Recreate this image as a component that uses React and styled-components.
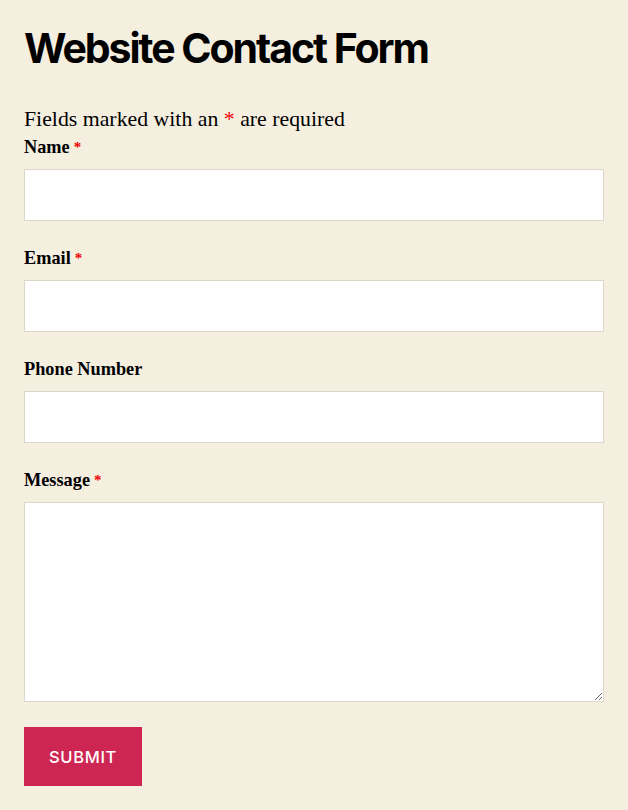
import React from 'react';
import styled, { createGlobalStyle } from 'styled-components';

const GlobalStyle = createGlobalStyle`
  html, body {
    margin: 0;
    padding: 0;
    background: #f5efe0;
  }
  * { box-sizing: border-box; }
`;

const Page = styled.div`
  padding: 23px 24px 24px;
  font-family: "Liberation Serif", "Times New Roman", serif;
  color: #000;
`;

const Title = styled.h1`
  margin: 0 0 34px;
  font-family: Inter, "Liberation Sans", sans-serif;
  font-weight: 700;
  font-size: 41px;
  line-height: 50px;
  letter-spacing: -0.05em;
  color: #000;
`;

const Note = styled.p`
  margin: 0 0 4px;
  font-size: 21.8px;
  line-height: 24px;
`;

const Req = styled.span`
  color: #e00;
  font-size: ${(p) => (p.small ? '15px' : 'inherit')};
  font-weight: ${(p) => (p.small ? 700 : 400)};
  vertical-align: ${(p) => (p.small ? 'top' : 'baseline')};
  margin-left: ${(p) => (p.small ? '4px' : '0')};
`;

const Form = styled.form`
  display: flex;
  flex-direction: column;
  gap: 25px;
`;

const Field = styled.div`
  display: flex;
  flex-direction: column;
  gap: 10px;
`;

const Label = styled.label`
  font-size: 18.3px;
  font-weight: 700;
  line-height: 24px;
`;

const Input = styled.input`
  width: 100%;
  height: 52px;
  border: 1px solid #dcd7ca;
  background: #fff;
  border-radius: 0;
  padding: 0 16px;
  font: inherit;
  outline: none;
`;

const TextArea = styled.textarea`
  width: 100%;
  height: 200px;
  border: 1px solid #dcd7ca;
  background: #fff;
  border-radius: 0;
  padding: 12px 16px;
  font: inherit;
  outline: none;
  display: block;
`;

const Submit = styled.button`
  align-self: flex-start;
  width: 118px;
  height: 59px;
  border: none;
  background: #cd2653;
  color: #fff;
  font-family: Inter, "Liberation Sans", sans-serif;
  font-size: 16.5px;
  font-weight: 500;
  letter-spacing: 0.04em;
  text-transform: uppercase;
  cursor: pointer;
`;

const fields = [
  { id: 'name', label: 'Name', required: true, type: 'text' },
  { id: 'email', label: 'Email', required: true, type: 'email' },
  { id: 'phone', label: 'Phone Number', required: false, type: 'tel' },
];

export default function App() {
  return (
    <>
      <GlobalStyle />
      <Page>
        <Title>Website Contact Form</Title>
        <Note>
          Fields marked with an <Req>*</Req> are required
        </Note>
        <Form onSubmit={(e) => e.preventDefault()}>
          {fields.map((f) => (
            <Field key={f.id}>
              <Label htmlFor={f.id}>
                {f.label}
                {f.required && <Req small>*</Req>}
              </Label>
              <Input id={f.id} type={f.type} />
            </Field>
          ))}
          <Field>
            <Label htmlFor="message">
              Message<Req small>*</Req>
            </Label>
            <TextArea id="message" />
          </Field>
          <Submit type="submit">Submit</Submit>
        </Form>
      </Page>
    </>
  );
}
